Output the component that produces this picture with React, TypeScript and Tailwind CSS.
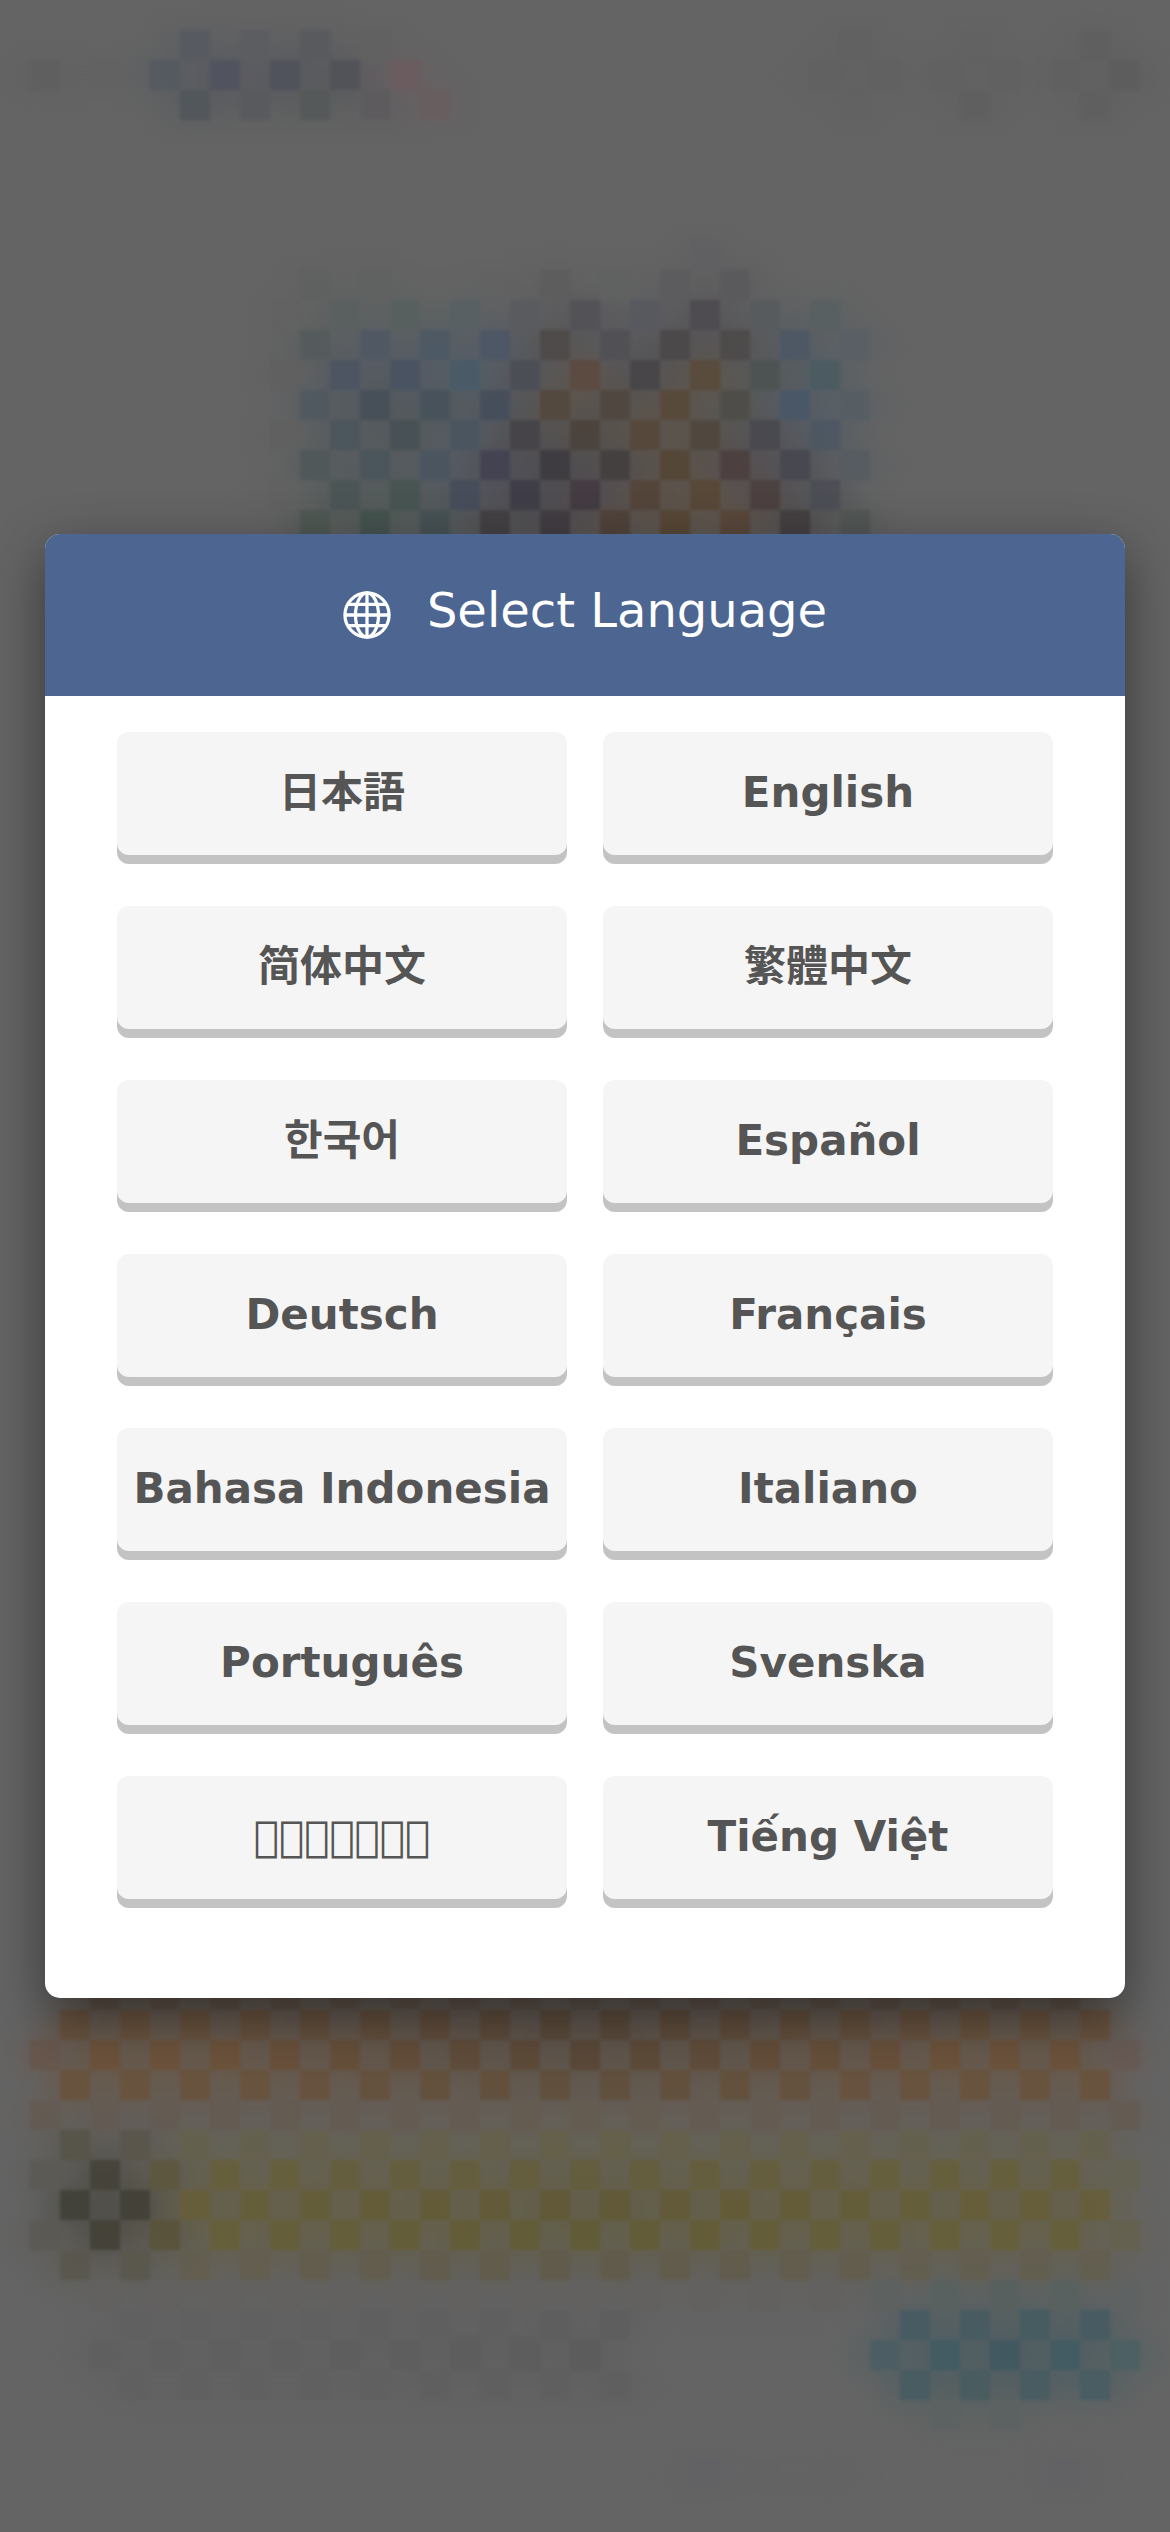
import React, { useState } from "react";

interface Language {
  code: string;
  label: string;
}

const LANGUAGES: Language[] = [
  { code: "ja", label: "日本語" },
  { code: "en", label: "English" },
  { code: "zh-Hans", label: "简体中文" },
  { code: "zh-Hant", label: "繁體中文" },
  { code: "ko", label: "한국어" },
  { code: "es", label: "Español" },
  { code: "de", label: "Deutsch" },
  { code: "fr", label: "Français" },
  { code: "id", label: "Bahasa Indonesia" },
  { code: "it", label: "Italiano" },
  { code: "pt", label: "Português" },
  { code: "sv", label: "Svenska" },
  // no glyphs for this one, shows as seven empty boxes
  { code: "th", label: "\uE001\uE001\uE001\uE001\uE001\uE001\uE001" },
  { code: "vi", label: "Tiếng Việt" },
];

const CELL = 30;

interface Cell {
  col: number;
  row: number;
  fill: string;
}

// Every second cell of a row, starting at the given column
const run = (row: number, from: number, colors: string): Cell[] =>
  colors.split(" ").map((c, i) => ({ row, col: from + i * 2, fill: `#${c}` }));

const channels = (hex: string) => [0, 2, 4].map((i) => parseInt(hex.slice(i, i + 2), 16));

// Every second cell from one column to another, shading from edge colour to middle colour and back
const band = (row: number, from: number, to: number, edge: string, mid: string): Cell[] => {
  const a = channels(edge);
  const b = channels(mid);
  const cells: Cell[] = [];
  for (let col = from; col <= to; col += 2) {
    const t = 1 - Math.min(1, Math.abs(col - 19) / 12);
    const rgb = a.map((v, i) => Math.round(v + (b[i] - v) * t));
    cells.push({ row, col, fill: `rgb(${rgb.join(",")})` });
  }
  return cells;
};

const CELLS: Cell[] = [
  // top bar
  ...run(1, 6, "575a60 5c5d61 595a5e 616162"),
  ...run(2, 1, "5f5f5f 626262 545a60 51535f 50525c 525359 6b5c5f"),
  ...run(3, 6, "52575c 595a5d 555959 5d5b5e 695e60"),
  ...run(1, 28, "616161"),
  ...run(1, 32, "626262"),
  ...run(1, 36, "5f5f5f"),
  ...run(2, 27, "616161 616161 616161 616161 606060 5d5d5d"),
  ...run(3, 28, "626262"),
  ...run(3, 32, "5f5f5f"),
  ...run(3, 36, "5f5f5f"),
  // hero picture
  ...run(8, 23, "606062"),
  ...run(9, 10, "5f6160 606161 636363 626262 5d5d5e 606161 5c5c5e 5a5a5d"),
  ...run(10, 9, "626262 5a6060 58605f 586064 5a5b5f 525257 58595f 4e4b50 585b5e 596061"),
  ...run(11, 10, "555b5c 505964 4d5964 4d5766 4d4a49 505055 4b484a 4d4a4a 4d5865 5a5f66"),
  ...run(12, 9, "5f605f 4c5562 495362 495b68 4b4e56 5b4a40 484549 594b3c 4d5353 4b5b62"),
  ...run(13, 10, "515960 465059 46525b 464e5b 53483d 4f463f 58493a 4e4d48 495768 565e65"),
  ...run(14, 9, "5f605f 4c565d 475155 4a5560 454347 4b423c 56483a 50473e 48484f 4d5763"),
  ...run(15, 10, "50585a 4a555c 4a5560 434252 3e3b40 443f3f 544636 4c3f40 464750 575c62"),
  ...run(16, 9, "606160 4b5555 465452 464d5a 3e3d47 433a42 54443a 574736 4b403f 4c4e55"),
  ...run(17, 10, "4e5853 44534f 465254 434044 413c41 51423a 574634 59463a 433e40 525654"),
  // orange strip
  ...band(66, 3, 35, "5f5147", "5c5048"),
  ...band(67, 2, 36, "69523d", "5a493a"),
  ...band(68, 3, 35, "6c523a", "5a4838"),
  ...run(68, 1, "68574c"),
  ...run(68, 37, "685a54"),
  ...band(69, 2, 36, "69533d", "5f4f3c"),
  ...band(70, 1, 37, "645b53", "655b51"),
  // yellow strip with the round badge at its left
  ...run(71, 2, "575449 5a564c"),
  ...band(71, 6, 36, "65604e", "64604a"),
  ...run(72, 1, "5c5a55 454339 5d573f"),
  ...band(72, 7, 35, "675f3d", "645d3d"),
  ...run(72, 37, "656252"),
  ...run(73, 2, "424138 424036"),
  ...band(73, 6, 36, "675e3a", "605934"),
  ...run(74, 1, "5b5953 444137 59533a"),
  ...band(74, 7, 35, "675f3a", "625b36"),
  ...run(74, 37, "65614f"),
  ...run(75, 2, "59574d 5a584d"),
  ...band(75, 6, 36, "635e4f", "615b4b"),
  // footer text and button
  ...band(76, 3, 27, "626160", "626160"),
  ...run(76, 29, "5d6160 596160 58605f 596160 5f6262"),
  ...band(77, 4, 20, "606061", "5e5e5f"),
  ...run(77, 30, "475b62 475b61 455c61 475b62"),
  ...band(78, 3, 19, "5f5f60", "5c5c5d"),
  ...run(78, 29, "4b5e63 425b62 405860 425b62 4c6063"),
  ...band(79, 4, 20, "606061", "5f5f60"),
  ...run(79, 30, "475c61 485c60 475c62 485d62"),
  ...run(80, 31, "5c6261 5c6261"),
  ...run(82, 23, "626266 636365 636365"),
  ...run(82, 35, "626266"),
];

// The dimmed, pixelated page that lies behind the dialog
const PageBackdrop: React.FC = () => (
  <svg
    className="absolute inset-0 h-full w-full"
    viewBox="0 0 1170 2532"
    preserveAspectRatio="xMidYMid slice"
    aria-hidden="true"
  >
    <defs>
      <filter id="cell-glow" x="-5%" y="-5%" width="110%" height="110%" colorInterpolationFilters="sRGB">
        <feGaussianBlur stdDeviation="14" />
      </filter>
      <filter id="cell-edge" x="-5%" y="-5%" width="110%" height="110%" colorInterpolationFilters="sRGB">
        <feGaussianBlur stdDeviation="1.5" />
      </filter>
    </defs>
    <g filter="url(#cell-glow)" opacity="0.55">
      {CELLS.map((c) => (
        <rect
          key={`${c.col}-${c.row}`}
          x={c.col * CELL - CELL / 2}
          y={c.row * CELL}
          width={CELL * 2}
          height={CELL}
          fill={c.fill}
        />
      ))}
    </g>
    <g filter="url(#cell-edge)" opacity="0.9">
      {CELLS.map((c) => (
        <rect
          key={`${c.col}-${c.row}`}
          x={c.col * CELL}
          y={c.row * CELL}
          width={CELL}
          height={CELL}
          fill={c.fill}
        />
      ))}
    </g>
  </svg>
);

const GlobeIcon: React.FC = () => (
  <svg
    className="h-12 w-12 shrink-0"
    viewBox="0 0 50 50"
    fill="none"
    stroke="currentColor"
    strokeWidth="3.4"
    aria-hidden="true"
  >
    <circle cx="25" cy="25" r="23" />
    <ellipse cx="25" cy="25" rx="12" ry="23" />
    <path d="M25 2v46M2 25h46M5 14h40M5 36h40" />
  </svg>
);

export default function App() {
  const [selected, setSelected] = useState("en");

  return (
    <div
      className="relative flex min-h-screen items-center justify-center bg-[#646464] px-[45px] py-12"
      style={{ fontFamily: '"DejaVu Sans", "Noto Sans CJK JP", sans-serif' }}
    >
      <PageBackdrop />

      <div
        role="dialog"
        aria-modal="true"
        aria-labelledby="language-title"
        className="relative w-full overflow-hidden rounded-[15px] bg-white shadow-[0_18px_54px_rgba(0,0,0,0.45)]"
      >
        {/* Header */}
        <div className="flex h-[162px] items-center justify-center gap-9 bg-[#4c6591] text-white">
          <GlobeIcon />
          <h2 id="language-title" className="pb-2.5 text-5xl leading-[60px] font-normal">
            Select Language
          </h2>
        </div>

        {/* Language choices */}
        <div className="grid grid-cols-2 gap-x-9 gap-y-[51px] px-[72px] pt-9 pb-[99px]">
          {LANGUAGES.map((lang) => (
            <button
              key={lang.code}
              type="button"
              lang={lang.code}
              aria-pressed={selected === lang.code}
              onClick={() => setSelected(lang.code)}
              className="h-[123px] cursor-pointer rounded-xl bg-[#f5f5f5] pb-0.5 text-[42px] leading-[60px] font-bold whitespace-nowrap text-[#555] shadow-[0_9px_0_#c3c3c3]"
            >
              {lang.label}
            </button>
          ))}
        </div>
      </div>
    </div>
  );
}
